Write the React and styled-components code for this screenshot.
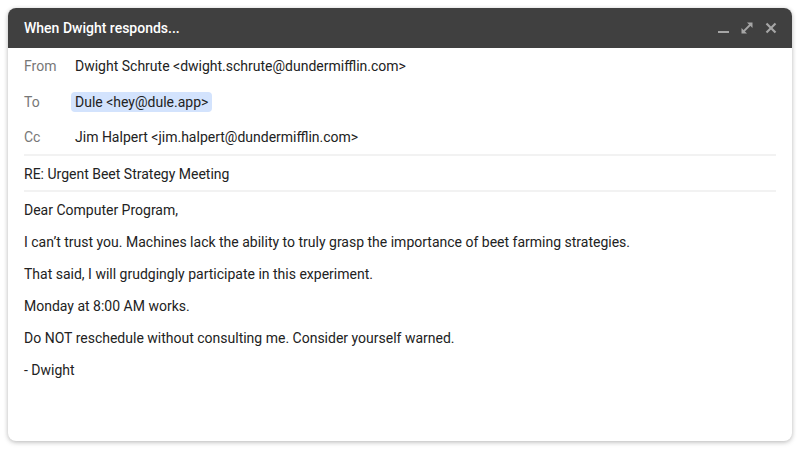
import React from "react";
import styled, { createGlobalStyle } from "styled-components";

const Global = createGlobalStyle`
  html, body { margin: 0; padding: 0; background: #ffffff; }
  body { font-family: Roboto, "Noto Sans", Arial, sans-serif; }
  * { box-sizing: border-box; }
`;

const Page = styled.div`
  padding: 8px;
  width: 800px;
  height: 449px;
`;

const Card = styled.div`
  width: 784px;
  height: 433px;
  background: #fff;
  border-radius: 8px;
  overflow: hidden;
  box-shadow: 0 1px 4px rgba(0, 0, 0, 0.22), 0 2px 6px rgba(0, 0, 0, 0.08);
  display: flex;
  flex-direction: column;
`;

const Header = styled.div`
  height: 40px;
  background: #404040;
  display: flex;
  align-items: center;
  justify-content: space-between;
  padding: 0 14px 0 16px;
`;

const Title = styled.div`
  color: #ffffff;
  font-size: 14px;
  font-weight: 500;
`;

const Controls = styled.div`
  display: flex;
  align-items: center;
  gap: 10px;
`;

const Ctrl = styled.svg`
  width: 14px;
  height: 14px;
  display: block;
`;

const Content = styled.div`
  padding: 0 16px;
  display: flex;
  flex-direction: column;
`;

const Row = styled.div`
  height: 36px;
  display: flex;
  align-items: center;
  font-size: 14px;
  color: #222;
  padding-top: ${(p) => (p.$shift ? "2px" : "0")};
  border-bottom: ${(p) => (p.$divider ? "2px solid #f2f2f2" : "none")};
`;

const Label = styled.div`
  width: ${(p) => (p.$narrow ? "47px" : "51px")};
  color: #777;
  flex-shrink: 0;
`;

const Chip = styled.span`
  background: #d3e3fd;
  border-radius: 4px;
  padding: 1px 4px;
  line-height: 18px;
`;

const Body = styled.div`
  padding-top: 8px;
  display: flex;
  flex-direction: column;
  gap: 12px;
  font-size: 14px;
  color: #222;
`;

const Para = styled.p`
  margin: 0;
  line-height: 20px;
`;

export default function App() {
  return (
    <>
      <Global />
      <Page>
        <Card>
          <Header>
            <Title>When Dwight responds...</Title>
            <Controls>
              <Ctrl viewBox="0 0 14 14">
                <rect x="2" y="10" width="11" height="2" fill="#a6a6a6" />
              </Ctrl>
              <Ctrl viewBox="0 0 14 14">
                <g stroke="#a6a6a6" strokeWidth="1.8" fill="none">
                  <path d="M3 11 L11 3" />
                </g>
                <path d="M7 1.5 H12.5 V7 Z" fill="#a6a6a6" />
                <path d="M1.5 7 V12.5 H7 Z" fill="#a6a6a6" />
              </Ctrl>
              <Ctrl viewBox="0 0 14 14">
                <g stroke="#a6a6a6" strokeWidth="2.2" strokeLinecap="butt">
                  <path d="M2.5 2.5 L11.5 11.5" />
                  <path d="M11.5 2.5 L2.5 11.5" />
                </g>
              </Ctrl>
            </Controls>
          </Header>
          <Content>
            <Row>
              <Label>From</Label>
              Dwight Schrute &lt;dwight.schrute@dundermifflin.com&gt;
            </Row>
            <Row>
              <Label $narrow>To</Label>
              <Chip>Dule &lt;hey@dule.app&gt;</Chip>
            </Row>
            <Row $divider>
              <Label>Cc</Label>
              Jim Halpert &lt;jim.halpert@dundermifflin.com&gt;
            </Row>
            <Row $divider $shift>RE: Urgent Beet Strategy Meeting</Row>
            <Body>
              <Para>Dear Computer Program,</Para>
              <Para>
                I can’t trust you. Machines lack the ability to truly grasp the importance of beet farming strategies.
              </Para>
              <Para>That said, I will grudgingly participate in this experiment.</Para>
              <Para>Monday at 8:00 AM works.</Para>
              <Para>Do NOT reschedule without consulting me. Consider yourself warned.</Para>
              <Para>- Dwight</Para>
            </Body>
          </Content>
        </Card>
      </Page>
    </>
  );
}
